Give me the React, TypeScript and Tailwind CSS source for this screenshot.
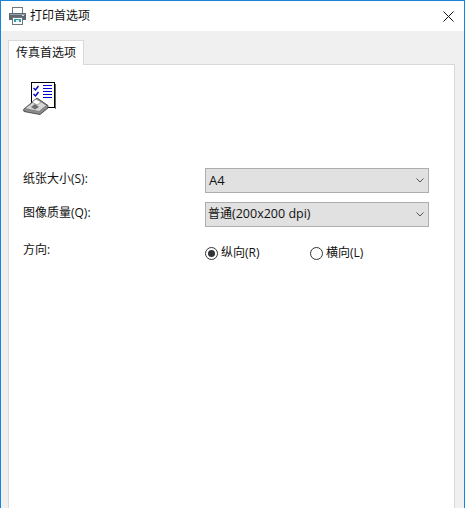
import React from "react";

function PrinterIcon() {
  return (
    <svg width="17" height="18" viewBox="0 0 17 18" shapeRendering="crispEdges">
      <rect x="3.5" y="0.5" width="10" height="7" fill="#fff" stroke="#6f777c" />
      <rect x="0" y="6" width="17" height="7" fill="#5f686e" />
      <rect x="1" y="7" width="15" height="1" fill="#99a1a6" />
      <rect x="13" y="8" width="2" height="1" fill="#d8dcde" />
      <rect x="3.5" y="10.5" width="10" height="7" fill="#fff" stroke="#6f777c" />
      <rect x="5" y="12" width="7" height="3" fill="#3aa0a8" />
      <rect x="7" y="13" width="3" height="2" fill="#d6eef0" />
    </svg>
  );
}

function FaxIcon() {
  return (
    <svg width="34" height="34" viewBox="0 0 34 34" shapeRendering="crispEdges">
      <rect x="8.5" y="1.5" width="23" height="25" fill="#fff" stroke="#000" />
      <rect x="32" y="3" width="1" height="25" fill="#666" />
      <g fill="none" stroke="#0000c8" strokeWidth="1.4" shapeRendering="auto">
        <path d="M10.5 7l2 2 3-4" />
        <path d="M10.5 13l2 2 3-4" />
      </g>
      <g fill="#0000c8">
        <rect x="20" y="4" width="9" height="1" />
        <rect x="20" y="7" width="9" height="1" />
        <rect x="20" y="10" width="9" height="1" />
        <rect x="20" y="13" width="9" height="1" />
        <rect x="20" y="16" width="9" height="1" />
      </g>
      <g shapeRendering="auto">
        <path d="M0.5 28.5 L14 17 L25 24.5 L25 27 L17 33.5 L1 30.5 Z" fill="#8c8c8c" stroke="#333" strokeWidth="0.8" />
        <path d="M2 27.5 L14 18 L23.5 24.5 L16 30.5 Z" fill="#d6d6d6" stroke="#666" strokeWidth="0.6" />
        <path d="M9 21 L13 18 L18 21 L14 24 Z" fill="#fff" stroke="#666" strokeWidth="0.5" />
        <path d="M8 26 L12 23 L16 26 L12 28.5 Z" fill="#6e6e6e" />
      </g>
    </svg>
  );
}

function Select({ children }: { children: React.ReactNode }) {
  return (
    <div className="flex h-[25px] w-[224px] items-center justify-between border border-[#adadad] bg-[#e1e1e1] pl-[2px] pr-[4px] text-[12px] text-[#111]">
      <span>{children}</span>
      <svg width="8" height="5" viewBox="0 0 8 5" fill="none" stroke="#555" strokeWidth="1">
        <path d="M0.5 0.5L4 4L7.5 0.5" />
      </svg>
    </div>
  );
}

function Radio({ checked, label }: { checked?: boolean; label: string }) {
  return (
    <div className="flex items-center gap-[3px] text-[12px] leading-[18px] text-[#111]">
      <span className="flex h-[13px] w-[13px] items-center justify-center rounded-full border border-[#333] bg-white">
        {checked && <span className="h-[7px] w-[7px] rounded-full bg-[#333]" />}
      </span>
      <span>{label}</span>
    </div>
  );
}

export default function App() {
  return (
    <div
      className="h-[528px] w-[465px] overflow-hidden bg-white"
      style={{ fontFamily: '"Open Sans", "Noto Sans CJK SC", sans-serif' }}
    >
      <div className="flex h-[508px] flex-col border-x border-t border-[#1883d7]">
        <div className="flex h-[30px] shrink-0 items-center bg-white pl-[8px] pr-[10px]">
          <PrinterIcon />
          <span className="ml-[4px] text-[12px] text-[#111]">打印首选项</span>
          <svg className="ml-auto" width="11" height="11" viewBox="0 0 11 11" stroke="#111" strokeWidth="1">
            <path d="M0.5 0.5L10.5 10.5M10.5 0.5L0.5 10.5" />
          </svg>
        </div>
        <div className="flex min-h-0 flex-1 flex-col bg-[#f0f0f0] pl-[7px] pr-[9px] pt-[9px]">
          <div className="z-10 -mb-px flex h-[25px] w-[76px] items-center justify-center border-x border-t border-[#d9d9d9] bg-white text-[12px] text-[#111]">
            传真首选项
          </div>
          <div className="flex min-h-0 flex-1 flex-col border-x border-t border-[#d9d9d9] bg-white pl-[14px]">
            <div className="mt-[16px] h-[34px]">
              <FaxIcon />
            </div>
            <div className="mt-[53px] flex items-start">
              <span className="w-[182px] pt-[2px] text-[12px] leading-[18px] text-[#111]">纸张大小(S):</span>
              <Select>
                <span className="pl-px text-[13px]">A4</span>
              </Select>
            </div>
            <div className="mt-[9px] flex items-start">
              <span className="w-[182px] pt-[2px] text-[12px] leading-[18px] text-[#111]">图像质量(Q):</span>
              <Select>
                普通<span className="text-[12.5px]">(200x200 dpi)</span>
              </Select>
            </div>
            <div className="mt-[14px] flex items-start">
              <span className="w-[182px] text-[12px] leading-[18px] text-[#111]">方向:</span>
              <div className="mt-[3px] w-[105px]">
                <Radio checked label="纵向(R)" />
              </div>
              <div className="mt-[3px]">
                <Radio label="横向(L)" />
              </div>
            </div>
          </div>
        </div>
      </div>
    </div>
  );
}
